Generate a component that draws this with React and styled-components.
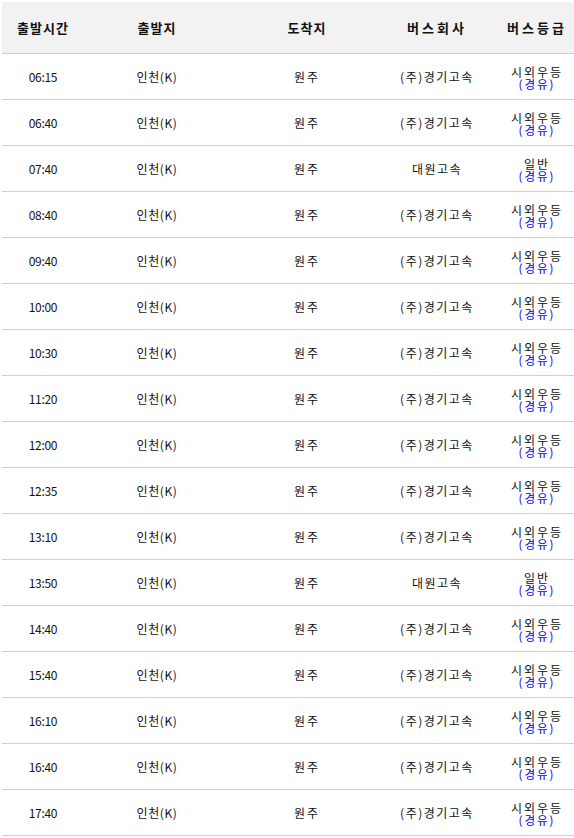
import React from 'react';
import styled, { createGlobalStyle } from 'styled-components';

const GlobalStyle = createGlobalStyle`
    body {
        margin: 0;
        background: #fff;
        font-family: "Noto Sans CJK KR", "DejaVu Sans", sans-serif;
        overflow: hidden;
    }
`;

const Wrap = styled.div`
    width: 574px;
    height: 838px;
    overflow: hidden;
    padding: 2px 0 0 2px;
    box-sizing: border-box;
`;

const Table = styled.table`
    width: 582px;
    border-collapse: collapse;
    table-layout: fixed;
    color: #111;
`;

const HeadCell = styled.th`
    height: 51px;
    background-color: #f2f2f2;
    border-bottom: 1px solid #cfcfcf;
    font-size: 13px;
    font-weight: bold;
    letter-spacing: ${(p) => p.$spacing || '1px'};
    text-align: center;
    padding: 0;
`;

const Cell = styled.td`
    height: 45px;
    border-bottom: 1px solid #cfcfcf;
    font-size: 12px;
    text-align: center;
    padding: 0;
    letter-spacing: ${(p) => p.$spacing || '0'};
`;

const Grade = styled.div`
    display: flex;
    flex-direction: column;
    align-items: center;
    font-size: 12px;
    line-height: 12px;
    padding-top: 2px;
    letter-spacing: 2px;

    span {
        color: #0000ee;
        font-size: 11.5px;
    }
`;

const times = ['06:15', '06:40', '07:40', '08:40', '09:40', '10:00', '10:30', '11:20', '12:00',
    '12:35', '13:10', '13:50', '14:40', '15:40', '16:10', '16:40', '17:40'];

const App = () => {
    const rows = times.map((t) => {
        const daewon = t === '07:40' || t === '13:50';
        return {
            time: t,
            from: '인천(K)',
            to: '원주',
            company: daewon ? '대원고속' : '(주)경기고속',
            grade: daewon ? '일반' : '시외우등',
        };
    });

    return (
        <Wrap>
            <GlobalStyle />
            <Table>
                <colgroup>
                    <col style={{ width: 82 }} />
                    <col style={{ width: 146 }} />
                    <col style={{ width: 154 }} />
                    <col style={{ width: 106 }} />
                    <col style={{ width: 94 }} />
                </colgroup>
                <thead>
                    <tr>
                        <HeadCell>출발시간</HeadCell>
                        <HeadCell>출발지</HeadCell>
                        <HeadCell>도착지</HeadCell>
                        <HeadCell $spacing='3px'>버스회사</HeadCell>
                        <HeadCell $spacing='3px'>버스등급</HeadCell>
                    </tr>
                </thead>
                <tbody>
                    {rows.map((r, i) => (
                        <tr key={i}>
                            <Cell $spacing='-0.3px'>{r.time}</Cell>
                            <Cell $spacing='0.6px'>{r.from}</Cell>
                            <Cell $spacing='2px'>{r.to}</Cell>
                            <Cell $spacing='1.5px'>{r.company}</Cell>
                            <Cell>
                                <Grade>
                                    {r.grade}
                                    <span>(경유)</span>
                                </Grade>
                            </Cell>
                        </tr>
                    ))}
                </tbody>
            </Table>
        </Wrap>
    );
};

export default App;
